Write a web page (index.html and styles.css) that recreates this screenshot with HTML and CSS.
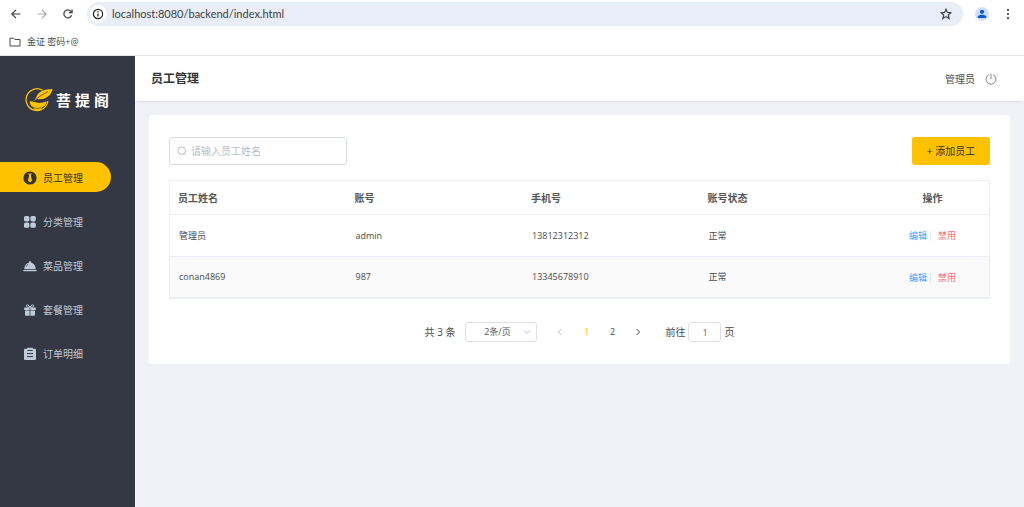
FILE: index.html
```html
<!DOCTYPE html>
<html lang="zh-CN">
<head>
<meta charset="utf-8">
<title>菩提阁</title>
<link rel="stylesheet" href="styles.css">
</head>
<body>
<div class="browser">
  <div class="toolbar">
    <button class="tool" aria-label="后退"><svg viewBox="0 0 12 12" width="12" height="12"><path d="M10.5 6H2M6 1.8L1.8 6L6 10.2"/></svg></button>
    <button class="tool tool-muted" aria-label="前进"><svg viewBox="0 0 12 12" width="12" height="12"><path d="M1.5 6H10M6 1.8L10.2 6L6 10.2"/></svg></button>
    <button class="tool" aria-label="刷新"><svg viewBox="0 0 12 12" width="12" height="12"><path d="M9.6 7.3A4 4 0 1 1 9 3.3L10 4.4M10.1 1.4V4.6H6.9"/></svg></button>
    <div class="address">
      <button class="site-info" aria-label="网站信息"><svg viewBox="0 0 12 12" width="12" height="12"><circle cx="6" cy="6" r="4.6"/><path d="M6 5.4V8.6M6 3.3V4.4"/></svg></button>
      <input class="url" type="text" value="localhost:8080/backend/index.html" aria-label="地址">
      <button class="tool" aria-label="收藏"><svg viewBox="0 0 12 12" width="12" height="12"><path d="M6 1.2L7.4 4.4L10.9 4.7L8.3 7L9.1 10.5L6 8.6L2.9 10.5L3.7 7L1.1 4.7L4.6 4.4Z"/></svg></button>
    </div>
    <button class="profile" aria-label="用户"><svg viewBox="0 0 14 14" width="14" height="14"><circle cx="7" cy="4.8" r="2.1"/><path d="M2.8 11V9.8C2.8 8.2 5.4 7.7 7 7.7S11.2 8.2 11.2 9.8V11Z"/></svg></button>
    <button class="tool" aria-label="菜单"><svg class="solid" viewBox="0 0 12 12" width="12" height="12"><circle cx="6" cy="1.8" r="1.1"/><circle cx="6" cy="6" r="1.1"/><circle cx="6" cy="10.2" r="1.1"/></svg></button>
  </div>
  <div class="bookmarks">
    <a class="bookmark" href="#"><svg viewBox="0 0 12 10" width="12" height="10"><path d="M1 1.2H4.6L5.8 2.5H11V9H1Z"/></svg>金证 密码+@</a>
  </div>
</div>
<div class="app">
  <aside class="sidebar">
    <div class="logo">
      <svg viewBox="0 0 28 24" width="28" height="24">
        <path d="M17.6 2.3A10.9 10.9 0 1 0 22.8 13" fill="none" stroke="#ffc200" stroke-width="1.3"/>
        <path d="M27.6 1C20 1.2 12.8 3.2 11.2 9.2L9.2 13L12.2 10.9C20 12.4 26 8 27.6 1Z" fill="#ffc200"/>
        <path d="M10.4 11.8C14 8.8 18 6 23 3.6" fill="none" stroke="#343744" stroke-width=".7"/>
        <path d="M4.6 13.4C7 12.9 9.4 14 11.6 14.6C15 15.5 18.4 14.4 21.6 13.2C21.4 16.2 19.6 18.3 17 19.3L16.6 21.6C14 22.9 11 22.8 8.8 21.4L8.8 19.4C6.2 18.2 4.6 16 4.6 13.4Z" fill="#ffc200"/>
        <path d="M8.8 19.7C11.5 20.6 14 20.6 16.7 19.6" fill="none" stroke="#343744" stroke-width=".6"/>
      </svg>
      <div class="brand"><span>菩</span><span>提</span><span>阁</span></div>
    </div>
    <nav class="menu">
      <a class="item active" href="#"><svg viewBox="0 0 14 14" width="14" height="14"><circle cx="7" cy="7" r="6.6"/><path class="cut" d="M5.3 2.6H8.7L7.9 4.4L9 9.8L7 11.5L5 9.8L6.1 4.4Z"/></svg>员工管理</a>
      <a class="item" href="#"><svg viewBox="0 0 14 14" width="14" height="14"><rect x="1" y="1" width="5.4" height="5.4" rx="1.6"/><rect x="7.4" y="1" width="5.4" height="5.4" rx="1.6"/><rect x="1" y="7.4" width="5.4" height="5.4" rx="1.6"/><rect x="7.4" y="7.4" width="5.4" height="5.4" rx="1.6"/></svg>分类管理</a>
      <a class="item" href="#"><svg viewBox="0 0 14 14" width="14" height="14"><path d="M1.2 10.2C1.5 6.3 3.6 4.1 6.1 3.5V2.2H7.9V3.5C10.4 4.1 12.5 6.3 12.8 10.2ZM.4 10.9H13.6V12.2H.4Z"/><path class="glint" d="M3.1 7.7C3.5 6.5 4.2 5.8 5.1 5.3"/></svg>菜品管理</a>
      <a class="item" href="#"><svg viewBox="0 0 14 14" width="14" height="14"><path d="M1.2 4.4H6.6V7H1.2ZM7.4 4.4H12.8V7H7.4ZM2 7.6H6.6V12.8H3Q2 12.8 2 11.8ZM7.4 7.6H12V11.8Q12 12.8 11 12.8H7.4Z"/><path class="bow" d="M7 4.2C5.6 1.2 3.4 1.4 3.3 2.7C3.2 4.1 5.4 4.2 7 4.2C8.6 4.2 10.8 4.1 10.7 2.7C10.6 1.4 8.4 1.2 7 4.2Z"/></svg>套餐管理</a>
      <a class="item" href="#"><svg viewBox="0 0 14 14" width="14" height="14"><path d="M2 1.8H4.2V.8H9.8V1.8H12Q13 1.8 13 2.8V12Q13 13 12 13H2Q1 13 1 12V2.8Q1 1.8 2 1.8Z"/><path class="line" d="M4.4 3.4H9.6M4 6.6H10M4 9.6H10"/></svg>订单明细</a>
    </nav>
  </aside>
  <div class="main">
    <header class="header">
      <h1>员工管理</h1>
      <span class="user">管理员</span>
      <button class="power" aria-label="退出"><svg viewBox="0 0 12 12" width="12" height="12"><path d="M4 1.6A5 5 0 1 0 8 1.6M6 .6V6.2"/></svg></button>
    </header>
    <main class="card">
      <div class="actions">
        <label class="search"><svg viewBox="0 0 10 10" width="10" height="10"><circle cx="4.7" cy="4.7" r="3.8"/><path d="M7.4 7.4L9 9"/></svg><input type="text" placeholder="请输入员工姓名" aria-label="员工姓名"></label>
        <button class="add">+ 添加员工</button>
      </div>
      <table class="staff">
        <thead><tr><th>员工姓名</th><th>账号</th><th>手机号</th><th>账号状态</th><th class="ops">操作</th></tr></thead>
        <tbody>
          <tr><td>管理员</td><td>admin</td><td>13812312312</td><td>正常</td><td class="ops"><button class="edit">编辑</button><button class="ban">禁用</button></td></tr>
          <tr><td>conan4869</td><td>987</td><td>13345678910</td><td>正常</td><td class="ops"><button class="edit">编辑</button><button class="ban">禁用</button></td></tr>
        </tbody>
      </table>
      <div class="pagination">
        <span>共 3 条</span>
        <div class="size">
          <select aria-label="每页条数"><option>2条/页</option></select>
          <svg viewBox="0 0 8 8" width="8" height="8"><path d="M1.2 2.6L4 5.4L6.8 2.6"/></svg>
        </div>
        <div class="pager">
          <button class="prev" aria-label="上一页"><svg viewBox="0 0 8 8" width="8" height="8"><path d="M5.4 1L2.4 4L5.4 7"/></svg></button>
          <button class="current">1</button>
          <button>2</button>
          <button aria-label="下一页"><svg viewBox="0 0 8 8" width="8" height="8"><path d="M2.6 1L5.6 4L2.6 7"/></svg></button>
        </div>
        <label class="jump">前往<input type="text" value="1">页</label>
      </div>
    </main>
  </div>
</div>
</body>
</html>
```
FILE: styles.css
```css
* { box-sizing: border-box; }
body {
  margin: 0;
  min-height: 100vh;
  display: flex;
  flex-direction: column;
  font: 10px/16px "Open Sans", "Noto Sans CJK SC", sans-serif;
  color: #4a4a4a;
  background: #fff;
}
button, input, select { font: inherit; color: inherit; border: 0; padding: 0; margin: 0; background: none; outline: 0; }
button { cursor: pointer; }
a { color: inherit; text-decoration: none; }
svg { display: block; flex: none; fill: none; stroke: currentColor; }

.browser { border-bottom: 1px solid #e4e5e8; }
.toolbar { display: flex; align-items: center; height: 28px; padding: 0 9px; gap: 12px; color: #3c3f43; }
.tool { flex: none; padding: 0 1px; }
.tool svg { stroke-width: 1.2; }
.tool-muted { color: #a5a7aa; }
.tool .solid { fill: currentColor; stroke: none; }
.address { flex: 1; display: flex; align-items: center; height: 24px; padding: 0 10px 0 2px; border-radius: 12px; background: #e9edf7; }
.site-info { display: grid; place-items: center; width: 18px; height: 18px; border-radius: 50%; background: #fff; color: #202124; }
.site-info svg { stroke-width: 1.2; }
.url { flex: 1; min-width: 0; padding-left: 5px; font-family: Lato, sans-serif; font-size: 11px; }
.profile { width: 14px; height: 14px; border-radius: 50%; background: #cfe0fc; color: #0b57d0; }
.profile svg { fill: currentColor; stroke: none; }
.bookmarks { display: flex; align-items: center; height: 27px; padding: 0 9px; }
.bookmark { display: flex; align-items: center; gap: 6px; font-size: 9px; }

.app { flex: 1; display: flex; }
.sidebar { flex: none; width: 135px; background: #343744; }
.logo { display: flex; align-items: center; gap: 3px; padding: 32px 0 0 25px; height: 56px; color: #fff; }
.logo svg { stroke: none; }
.brand { display: flex; gap: 4px; font-size: 15px; font-weight: 700; line-height: 24px; }
.menu { display: grid; gap: 14px; padding: 50px 24px 0 0; }
.item { display: flex; align-items: center; gap: 6px; height: 30px; padding: 2px 0 0 23px; color: #bfcbd9; }
.item svg { fill: currentColor; stroke: none; }
.item .line, .item .glint { fill: none; stroke: #343744; stroke-width: 1; }
.item .glint { stroke-width: .7; }
.item .bow { fill: none; stroke: currentColor; stroke-width: 1; }
.item.active { background: #ffc200; color: #333; border-radius: 0 15px 15px 0; }
.item .cut { fill: #ffc200; }

.main { flex: 1; min-width: 0; background: #f1f2f7; }
.header { display: flex; align-items: center; height: 45px; padding: 0 27px 0 16px; background: #fff; box-shadow: 0 2px 3px -2px #c8cbd3; }
.header h1 { flex: 1; margin: 0; font-size: 12px; color: #333; }
.user { margin-right: 10px; }
.power { color: #888b93; }

.card { margin: 14px; padding: 22px 20px; background: #fff; border-radius: 3px; }
.actions { display: flex; justify-content: space-between; margin-bottom: 15px; }
.search { display: flex; align-items: center; gap: 4px; width: 178px; height: 28px; padding: 0 7px; border: 1px solid #d8dce5; border-radius: 3px; color: #b8bcc8; }
.search input { flex: 1; min-width: 0; color: #606266; }
.search input::placeholder { color: #b8bcc8; opacity: 1; }
.add { width: 78px; height: 28px; border-radius: 3px; background: #ffc200; color: #333; }

.staff { width: 100%; table-layout: fixed; border-collapse: separate; border-spacing: 0; border: 1px solid #ebeef5; border-bottom-width: 2px; }
.staff th, .staff td { padding: 0 9px; text-align: left; }
.staff th { height: 34px; padding: 0 8px; color: #555; border-bottom: 1px solid #ebeef5; }
.staff td { height: 41px; font-size: 9px; }
.staff tr + tr td { background: #fafafa; border-top: 1px solid #ebeef5; }
.staff .ops { width: 113px; text-align: center; }
.edit, .ban { vertical-align: middle; line-height: 10px; }
.edit { padding-right: 3px; color: #409eff; border-right: 1px solid #e6e8ee; }
.ban { padding-left: 7px; color: #f56c6c; }

.pagination { display: flex; align-items: center; justify-content: center; gap: 10px; margin-top: 23px; }
.size { display: flex; align-items: center; width: 72px; height: 20px; padding: 0 5px; border: 1px solid #dcdfe6; border-radius: 3px; color: #b8bcc8; }
.size select { flex: 1; appearance: none; text-align: center; font-size: 9px; color: #555; }
.pager { display: flex; }
.pager button { display: grid; place-items: center; width: 26px; height: 20px; font-size: 9px; }
.pager .prev { color: #b8bcc8; }
.pager .prev + .current { color: #ffc200; }
.jump { display: flex; align-items: center; gap: 3px; padding-left: 4px; }
.jump input { width: 33px; height: 20px; border: 1px solid #dcdfe6; border-radius: 3px; text-align: center; font-size: 9px; color: #606266; }
```
